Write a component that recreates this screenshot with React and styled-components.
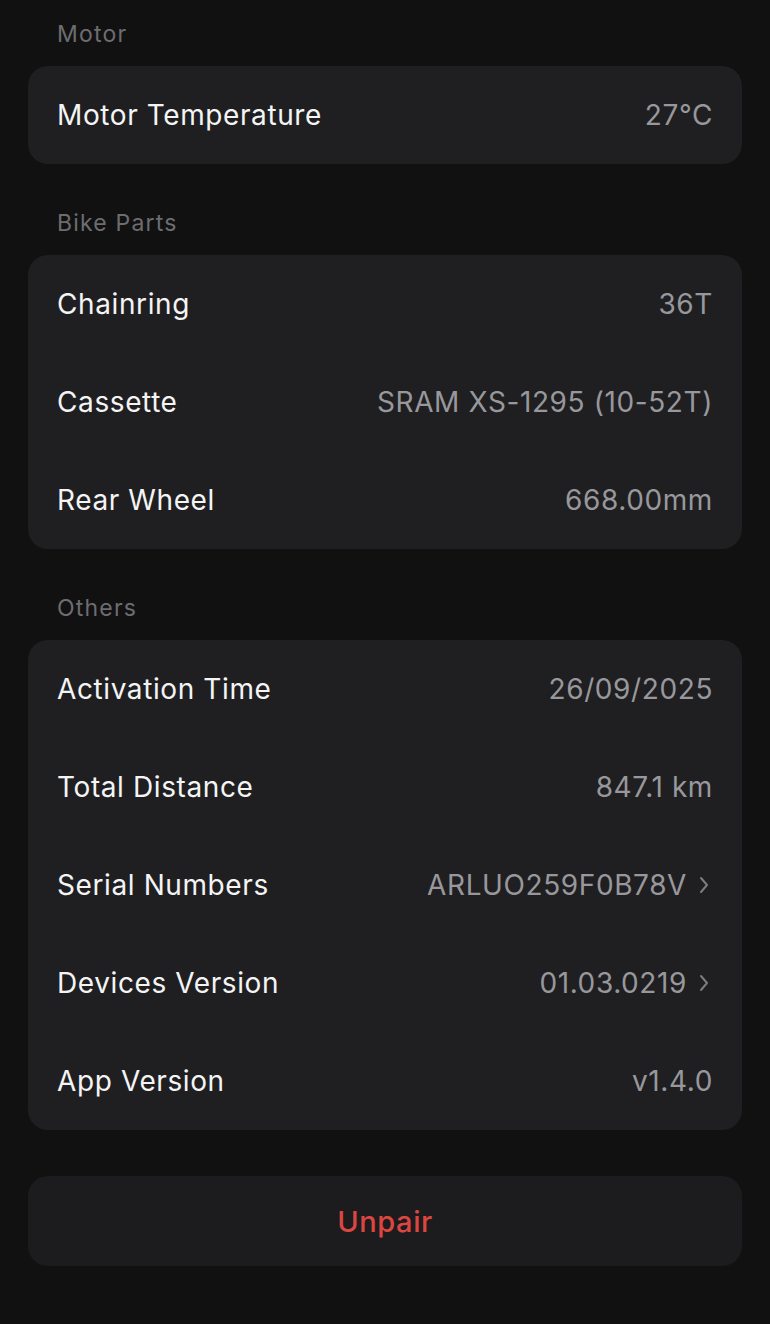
import React from "react";
import styled, { createGlobalStyle } from "styled-components";

const Global = createGlobalStyle`
  html, body { margin: 0; padding: 0; background: #111112; }
  body { font-family: Inter, "Noto Sans", sans-serif; -webkit-font-smoothing: antialiased; }
`;

const Page = styled.div`
  background: #111112;
  min-height: 1324px;
  padding: 20px 28px 58px;
  box-sizing: border-box;
  display: flex;
  flex-direction: column;
`;

const Section = styled.section`
  display: flex;
  flex-direction: column;
  margin-bottom: 45px;
`;

const Header = styled.div`
  font-size: 23px;
  line-height: 28px;
  color: #6d6d70;
  letter-spacing: 1.2px;
  padding-left: 29px;
  margin-bottom: 18px;
`;

const Card = styled.div`
  background: #1f1f21;
  border-radius: 20px;
  display: flex;
  flex-direction: column;
`;

const Row = styled.div`
  height: 98px;
  display: flex;
  align-items: center;
  justify-content: space-between;
  padding: 0 29px;
  cursor: ${(p) => (p.$link ? "pointer" : "default")};
`;

const Label = styled.span`
  font-size: 28px;
  color: #f4f4f5;
  letter-spacing: 0.6px;
`;

const Value = styled.span`
  display: flex;
  align-items: center;
  gap: 12px;
  font-size: 28px;
  color: #98989c;
  letter-spacing: 0.6px;
`;

const Chevron = styled.svg`
  width: 10px;
  height: 18px;
  margin-right: 4px;
`;

const UnpairButton = styled.button`
  margin-top: 1px;
  height: 90px;
  border: none;
  border-radius: 20px;
  background: #1c1c1e;
  color: #dc4640;
  font-family: Inter, "Noto Sans", sans-serif;
  font-size: 29px;
  font-weight: 500;
  letter-spacing: 0.6px;
  cursor: pointer;
`;

const ChevronIcon = () => (
  <Chevron viewBox="0 0 10 18" fill="none">
    <path d="M2 2 L8 9 L2 16" stroke="#7c7c80" strokeWidth="2" strokeLinecap="round" strokeLinejoin="round" />
  </Chevron>
);

const sections = [
  { title: "Motor", rows: [{ label: "Motor Temperature", value: "27°C" }] },
  {
    title: "Bike Parts",
    rows: [
      { label: "Chainring", value: "36T" },
      { label: "Cassette", value: "SRAM XS-1295 (10-52T)" },
      { label: "Rear Wheel", value: "668.00mm" },
    ],
  },
  {
    title: "Others",
    rows: [
      { label: "Activation Time", value: "26/09/2025" },
      { label: "Total Distance", value: "847.1 km" },
      { label: "Serial Numbers", value: "ARLUO259F0B78V", link: true },
      { label: "Devices Version", value: "01.03.0219", link: true },
      { label: "App Version", value: "v1.4.0" },
    ],
  },
];

export default function App() {
  return (
    <>
      <Global />
      <Page>
        {sections.map((s) => (
          <Section key={s.title}>
            <Header>{s.title}</Header>
            <Card>
              {s.rows.map((r) => (
                <Row key={r.label} $link={r.link}>
                  <Label>{r.label}</Label>
                  <Value>
                    {r.value}
                    {r.link && <ChevronIcon />}
                  </Value>
                </Row>
              ))}
            </Card>
          </Section>
        ))}
        <UnpairButton>Unpair</UnpairButton>
      </Page>
    </>
  );
}
